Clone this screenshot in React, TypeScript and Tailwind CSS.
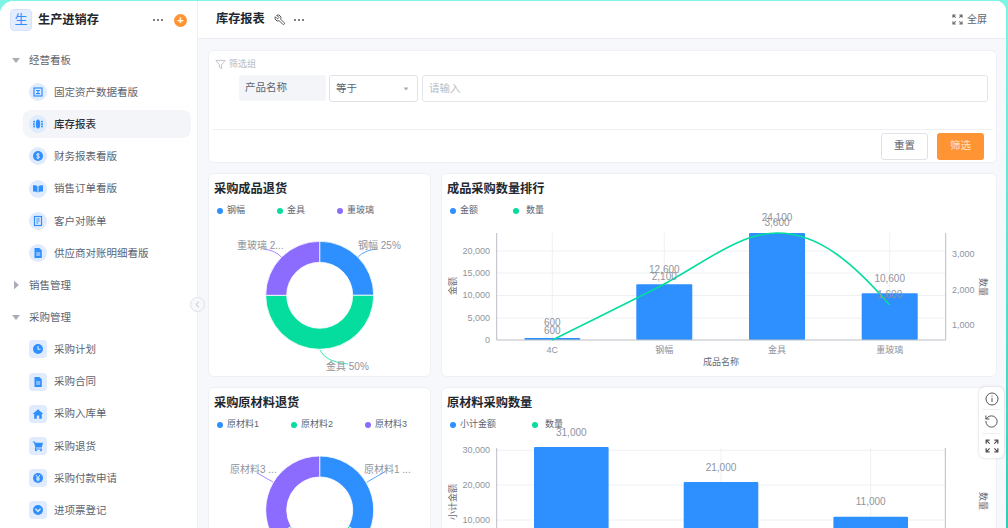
import React from "react";
import { RotateCcw } from "lucide-react";

const BLUE = "#2e8fff";
const GREEN = "#05dd9e";
const PURPLE = "#8c6cff";
const C = { fill: "#2e8fff" };

const icons: Record<string, React.ReactNode> = {
  board: (
    <g fill="none" stroke={BLUE} strokeWidth="1.2">
      <rect x="2" y="2" width="8" height="8" />
      <path d="M4 4.5h4M6 4.5v3M4 7.7h4" />
    </g>
  ),
  globe: (
    <g {...C}>
      <ellipse cx="6" cy="6" rx="2.2" ry="4.6" />
      <rect x="1.2" y="2.8" width="1.8" height="1.8" rx=".6" />
      <rect x="1" y="5.2" width="1.8" height="1.8" rx=".6" />
      <rect x="1.2" y="7.6" width="1.8" height="1.8" rx=".6" />
      <rect x="9" y="2.8" width="1.8" height="1.8" rx=".6" />
      <rect x="9.2" y="5.2" width="1.8" height="1.8" rx=".6" />
      <rect x="9" y="7.6" width="1.8" height="1.8" rx=".6" />
    </g>
  ),
  dollar: (
    <g>
      <circle cx="6" cy="6" r="5" fill={BLUE} />
      <path d="M7.6 4.4C7.2 3.6 4.6 3.5 4.5 4.8c0 1.5 3.1.8 3.1 2.4 0 1.3-2.6 1.2-3.2.3M6 2.8v6.4" fill="none" stroke="#e0ebfd" strokeWidth="1" />
    </g>
  ),
  book: (
    <g {...C}>
      <path d="M1 2.5c1.8-.4 3.4-.1 4.5.8v6.2C4.4 8.7 2.8 8.4 1 8.8z" />
      <path d="M11 2.5c-1.8-.4-3.4-.1-4.5.8v6.2c1.1-.8 2.7-1.1 4.5-.7z" />
    </g>
  ),
  doc: (
    <g fill="none" stroke={BLUE} strokeWidth="1.2">
      <rect x="2.5" y="1.5" width="7" height="9" />
      <path d="M4.3 4h3.4M4.3 6h3.4M4.3 8h2" />
    </g>
  ),
  file: (
    <g>
      <path d="M2.5 1h4.8L9.8 3.5V11H2.5z" fill={BLUE} />
      <path d="M4.2 6h4M4.2 8h4" stroke="#e0ebfd" strokeWidth="1" />
    </g>
  ),
  clock: (
    <g>
      <circle cx="6" cy="6" r="5" fill={BLUE} />
      <path d="M6 3v3.3h2.6" fill="none" stroke="#e0ebfd" strokeWidth="1.1" />
    </g>
  ),
  home: <path d="M6 1.2L11.3 6H9.8v4.8H7.2V7.6H4.8v3.2H2.2V6H.7z" {...C} />,
  cart: (
    <g {...C}>
      <path d="M.8 1.5h2l.5 1.3H11L9.8 7.5H4.2l-.2 1h6v1H2.7l.6-2.3L2 2.5H.8z" />
      <circle cx="4" cy="10.3" r="1" />
      <circle cx="9" cy="10.3" r="1" />
    </g>
  ),
  yen: (
    <g>
      <circle cx="6" cy="6" r="5" fill={BLUE} />
      <path d="M4 3l2 2.8L8 3M6 5.8V9.5M4.2 6.2h3.6M4.2 7.8h3.6" fill="none" stroke="#e0ebfd" strokeWidth="1" />
    </g>
  ),
  chev: (
    <g>
      <circle cx="6" cy="6" r="5" fill={BLUE} />
      <path d="M3.5 4.8L6 7.4l2.5-2.6" fill="none" stroke="#e0ebfd" strokeWidth="1.4" />
    </g>
  ),
};

function MenuItem({ icon, label, active, square }: { icon: string; label: string; active?: boolean; square?: boolean }) {
  return (
    <div className={`flex h-7 items-center rounded-lg pl-[6px] ${active ? "bg-[#f3f5f9] text-[#2c3038]" : "text-[#5c6470]"}`}>
      <span className={`flex h-[18px] w-[18px] shrink-0 items-center justify-center bg-[#e0ebfd] ${square ? "rounded-[4px]" : "rounded-full"}`}>
        <svg width="12" height="12" viewBox="0 0 12 12">{icons[icon]}</svg>
      </span>
      <span className={`ml-[7px] text-[10.5px] leading-none ${active ? "font-medium" : ""}`}>{label}</span>
    </div>
  );
}

function Group({ label, open }: { label: string; open: boolean }) {
  return (
    <div className="flex h-7 items-center text-[#5c6470]">
      <svg width="10" height="10" viewBox="0 0 10 10" className="ml-[-18px] mr-2" fill="#a9adb5">
        {open ? <path d="M1 3h8L5 8z" /> : <path d="M3 .8v8.4L8 5z" />}
      </svg>
      <span className="text-[10.5px] leading-none">{label}</span>
    </div>
  );
}

function Dots() {
  return (
    <span className="flex gap-[2px]">
      <i className="h-[2px] w-[2px] rounded-full bg-[#555]" />
      <i className="h-[2px] w-[2px] rounded-full bg-[#555]" />
      <i className="h-[2px] w-[2px] rounded-full bg-[#555]" />
    </span>
  );
}

function Sidebar() {
  return (
    <aside className="flex h-full w-[197px] shrink-0 flex-col bg-white">
      <div className="flex h-[38px] shrink-0 items-center pl-[10px]">
        <span className="flex h-[22px] w-[22px] items-center justify-center rounded-[4px] border border-[#d6e3fa] bg-[#e4edfd] text-[13px] text-[#2e8fff]">生</span>
        <span className="ml-[6px] w-[61px] text-[12.2px] font-semibold text-[#23272e]">生产进销存</span>
        <span className="ml-[54px]"><Dots /></span>
        <span className="ml-[11px] flex h-[13px] w-[13px] items-center justify-center rounded-full bg-[#ff9434] text-[11px] font-bold leading-none text-white">+</span>
      </div>
      <div className="flex flex-col gap-[4.17px] pl-[29px] pr-[6px] pt-[7px]">
        <Group label="经营看板" open />
        <div className="ml-[-6px] flex flex-col gap-[4.17px]">
          <MenuItem icon="board" label="固定资产数据看版" />
          <MenuItem icon="globe" label="库存报表" active />
          <MenuItem icon="dollar" label="财务报表看版" />
          <MenuItem icon="book" label="销售订单看版" />
          <MenuItem icon="doc" label="客户对账单" />
          <MenuItem icon="file" label="供应商对账明细看版" />
        </div>
        <Group label="销售管理" open={false} />
        <Group label="采购管理" open />
        <div className="ml-[-6px] flex flex-col gap-[4.17px]">
          <MenuItem icon="clock" label="采购计划" square />
          <MenuItem icon="file" label="采购合同" square />
          <MenuItem icon="home" label="采购入库单" square />
          <MenuItem icon="cart" label="采购退货" square />
          <MenuItem icon="yen" label="采购付款申请" square />
          <MenuItem icon="chev" label="进项票登记" square />
        </div>
      </div>
    </aside>
  );
}

function Expand({ size, stroke }: { size: number; stroke: string }) {
  return (
    <svg width={size} height={size} viewBox="0 0 12 12" fill="none" stroke={stroke} strokeWidth="1.1">
      <path d="M1 4V1h3M1 1l3 3M8 1h3v3M11 1L8 4M1 8v3h3M1 11l3-3M8 11h3V8M11 11L8 8" />
    </svg>
  );
}

function Header() {
  return (
    <header className="flex h-[38px] shrink-0 items-center border-b border-[#e9ecf1] bg-white pl-[18px] pr-[19px]">
      <span className="text-[12.2px] font-semibold text-[#23272e]">库存报表</span>
      <svg width="12" height="12" viewBox="0 0 24 24" fill="none" stroke="#555" strokeWidth="2" className="ml-[9px]">
        <path d="M14.7 6.3a1 1 0 0 0 0 1.4l1.6 1.6a1 1 0 0 0 1.4 0l3.77-3.77a6 6 0 0 1-7.94 7.94l-6.91 6.91a2.12 2.12 0 0 1-3-3l6.91-6.91a6 6 0 0 1 7.94-7.94z" transform="matrix(-1 0 0 1 24 0)" />
      </svg>
      <span className="ml-[8px]"><Dots /></span>
      <span className="ml-auto flex items-center gap-[4px] text-[10px] text-[#5c6470]">
        <Expand size={11} stroke="#666" />
        全屏
      </span>
    </header>
  );
}

function FilterCard() {
  return (
    <section className="flex h-[113px] shrink-0 flex-col rounded-md border border-[#eef0f4] bg-white">
      <div className="flex h-[24px] items-center gap-[3px] pl-[6px] pt-[3px] text-[9px] text-[#b5b9c0]">
        <svg width="11" height="11" viewBox="0 0 12 12" fill="none" stroke="#b5b9c0" strokeWidth=".9">
          <path d="M1 1.5h10L7.2 6.2v4.3L4.8 9V6.2z" />
        </svg>
        筛选组
      </div>
      <div className="flex h-[54px] items-start gap-[3px] pl-[30px] pr-[8px]">
        <div className="flex h-[26px] w-[87px] items-center rounded-[3px] bg-[#f3f5f8] pl-[6px] text-[10.5px] text-[#5c6470]">产品名称</div>
        <div className="flex h-[27px] w-[89px] items-center justify-between rounded-[3px] border border-[#dfe2e7] pl-[6px] pr-[8px] text-[10.5px] text-[#5c6470]">
          等于
          <svg width="6" height="4" viewBox="0 0 6 4" fill="#a9adb5"><path d="M.5.5h5L3 3.5z" /></svg>
        </div>
        <div className="ml-px flex h-[27px] flex-1 items-center rounded-[3px] border border-[#e3e5ea] pl-[6px] text-[10.5px] text-[#b8bcc3]">请输入</div>
      </div>
      <div className="mx-[3px] flex flex-1 items-center justify-end gap-[9px] border-t border-[#eef0f4] pr-[9px]">
        <button className="flex h-[27px] w-[47px] items-center justify-center rounded-[3px] border border-[#dfe2e7] bg-white text-[10.5px] text-[#5c6470]">重置</button>
        <button className="flex h-[27px] w-[47px] items-center justify-center rounded-[3px] bg-[#ff9434] text-[10.5px] text-[#ffe3c9]">筛选</button>
      </div>
    </section>
  );
}

function Legend({ items, gaps, wide }: { items: { c: string; t: string }[]; gaps: string[]; wide?: boolean }) {
  return (
    <div className="-mb-px -mt-[12px] flex h-[12px] shrink-0 items-center pl-[8px] text-[9px] text-[#5c6470]">
      {items.map((it, i) => (
        <span key={it.t} className={`flex items-center ${wide && i === 1 ? "gap-[7px]" : "gap-[4px]"} ${gaps[i]}`}>
          <i className="h-[6px] w-[6px] rounded-full" style={{ background: it.c }} />
          {it.t}
        </span>
      ))}
    </div>
  );
}

function Card({ title, className, children }: { title: string; className: string; children: React.ReactNode }) {
  return (
    <section className={`flex flex-col rounded-md border border-[#eef0f4] bg-white ${className}`}>
      <div className="h-[43px] shrink-0 pl-[5px] pt-[7px]">
        <h3 className="text-[12.2px] font-semibold leading-[16px] text-[#23272e]">{title}</h3>
      </div>
      {children}
    </section>
  );
}

function polar(cx: number, cy: number, r: number, deg: number) {
  const a = ((deg - 90) * Math.PI) / 180;
  return [cx + r * Math.cos(a), cy + r * Math.sin(a)];
}
function Slice({ cx, cy, from, to, fill }: { cx: number; cy: number; from: number; to: number; fill: string }) {
  const R = 54, r = 33;
  const [a, b] = polar(cx, cy, R, from);
  const [c, d] = polar(cx, cy, R, to);
  const [e, f] = polar(cx, cy, r, to);
  const [g, h] = polar(cx, cy, r, from);
  const large = to - from > 180 ? 1 : 0;
  return <path d={`M${a} ${b}A${R} ${R} 0 ${large} 1 ${c} ${d}L${e} ${f}A${r} ${r} 0 ${large} 0 ${g} ${h}Z`} fill={fill} stroke="#fff" strokeWidth=".8" />;
}

const labelCls = "fill-[#8f949d] text-[10px]";
const axisCls = "fill-[#8f949d] text-[9px]";
const titleCls = "fill-[#666c76] text-[9px]";

function T({ x, y, children, a = "middle", c = labelCls, r }: { x: number; y: number; children: React.ReactNode; a?: "middle" | "start" | "end"; c?: string; r?: number }) {
  return (
    <text x={x} y={y} textAnchor={a} dominantBaseline="middle" className={c} transform={r ? `rotate(${r} ${x} ${y})` : undefined}>
      {children}
    </text>
  );
}

function Donut1() {
  return (
    <svg viewBox="209 216 222 160" className="h-[160px] w-[222px] overflow-visible">
      <Slice cx={319.7} cy={295.3} from={0} to={90} fill={BLUE} />
      <Slice cx={319.7} cy={295.3} from={90} to={270} fill={GREEN} />
      <Slice cx={319.7} cy={295.3} from={270} to={360} fill={PURPLE} />
      <path d="M358.3 256.7Q365 250 377 249" fill="none" stroke={BLUE} strokeWidth=".8" />
      <path d="M281.7 257.3Q275 250 263 249" fill="none" stroke={PURPLE} strokeWidth=".8" />
      <path d="M320 350Q325 362 348 364" fill="none" stroke={GREEN} strokeWidth=".8" />
      <T x={358} y={246.5} a="start">钢幅 25%</T>
      <T x={237} y={246.5} a="start">重玻璃 2...</T>
      <T x={326} y={367.5} a="start">金具 50%</T>
    </svg>
  );
}

function Bars1() {
  const grid = [251, 273, 295.5, 318];
  const xs = [552.3, 664.3, 777, 889.7];
  const tops = [338, 284.3, 233, 293.3];
  return (
    <svg viewBox="442 216 554 160" className="h-[160px] w-[554px] overflow-visible">
      {grid.map((y) => <path key={y} d={`M497 ${y}H946`} stroke="#eef0f3" strokeWidth="1" />)}
      {xs.map((x) => <path key={x} d={`M${x} 233V340`} stroke="#eef0f3" strokeWidth="1" />)}
      {xs.map((x, i) => <rect key={x} x={x - 28} y={tops[i]} width="56" height={340 - tops[i]} rx="1" fill={BLUE} />)}
      <path d="M496.7 233V340H945.7V233" fill="none" stroke="#b9bdc4" strokeWidth="1" />
      <path d="M552.3 340C590 321 628 303 664.3 284C705 262 740 233 777 233C820 233 855 265 889.7 305" fill="none" stroke={GREEN} strokeWidth="1.6" />
      {[["20,000", 251.5], ["15,000", 273.5], ["10,000", 296], ["5,000", 318.5], ["0", 340.5]].map(([t, y]) => (
        <T key={t} x={490} y={y as number} a="end" c={axisCls}>{t}</T>
      ))}
      {[["3,000", 254.5], ["2,000", 290.5], ["1,000", 326]].map(([t, y]) => (
        <T key={t} x={952} y={y as number} a="start" c={axisCls}>{t}</T>
      ))}
      {["4C", "钢幅", "金具", "重玻璃"].map((t, i) => <T key={t} x={xs[i]} y={351} c={axisCls}>{t}</T>)}
      <T x={721} y={363} c={titleCls}>成品名称</T>
      <T x={454} y={286} c={titleCls} r={-90}>金额</T>
      <T x={982} y={287} c={titleCls} r={90}>数量</T>
      <T x={552.3} y={323}>600</T>
      <T x={552.3} y={331}>600</T>
      <T x={664.3} y={270}>12,600</T>
      <T x={664.3} y={277.7}>2,100</T>
      <T x={777} y={218.5}>24,100</T>
      <T x={777} y={223.5}>3,600</T>
      <T x={889.7} y={279}>10,600</T>
      <T x={889.7} y={295.5}>1,600</T>
    </svg>
  );
}

function Donut2() {
  return (
    <svg viewBox="209 430 222 160" className="h-[160px] w-[222px] overflow-visible">
      <Slice cx={319.7} cy={510} from={0} to={120} fill={BLUE} />
      <Slice cx={319.7} cy={510} from={120} to={240} fill={GREEN} />
      <Slice cx={319.7} cy={510} from={240} to={360} fill={PURPLE} />
      <path d="M366.7 482.3L385 471.7" stroke={BLUE} strokeWidth=".8" />
      <path d="M273 482L256.7 472.7" stroke={PURPLE} strokeWidth=".8" />
      <T x={364} y={470.5} a="start">原材料1 ...</T>
      <T x={230} y={470.5} a="start">原材料3 ...</T>
    </svg>
  );
}

function Bars2() {
  const xs = [571.3, 721, 870.7];
  const tops = [447, 482, 516.7];
  return (
    <svg viewBox="442 430 554 160" className="h-[160px] w-[554px] overflow-visible">
      {[450.3, 485, 520].map((y) => <path key={y} d={`M497 ${y}H946`} stroke="#eef0f3" strokeWidth="1" />)}
      {xs.map((x) => <path key={x} d={`M${x} 448V600`} stroke="#eef0f3" strokeWidth="1" />)}
      {xs.map((x, i) => <rect key={x} x={x - 37.3} y={tops[i]} width="74.6" height="120" rx="1" fill={BLUE} />)}
      <path d="M496.7 448V600M945.3 448V600" fill="none" stroke="#b9bdc4" strokeWidth="1" />
      {[["30,000", 450.8], ["20,000", 485.5], ["10,000", 520.5]].map(([t, y]) => (
        <T key={t} x={490} y={y as number} a="end" c={axisCls}>{t}</T>
      ))}
      <T x={454} y={502} c={titleCls} r={-90}>小计金额</T>
      <T x={982} y={501} c={titleCls} r={90}>数量</T>
      <T x={571.3} y={433}>31,000</T>
      <T x={721} y={468}>21,000</T>
      <T x={870.7} y={502.5}>11,000</T>
    </svg>
  );
}

function Toolbar() {
  return (
    <div className="absolute right-[4px] top-[387px] flex h-[71px] w-[25px] flex-col items-center rounded-md bg-white pt-px shadow-[0_0_3px_rgba(0,0,0,0.18)]">
      <div className="flex h-[22px] w-[19px] items-center justify-center border-b border-[#eef0f4]">
        <svg width="14" height="14" viewBox="0 0 14 14" fill="none" stroke="#555" strokeWidth="1">
          <circle cx="7" cy="7" r="6" />
          <path d="M7 6v4M7 3.6v1.1" />
        </svg>
      </div>
      <div className="flex h-[24px] w-[19px] items-center justify-center border-b border-[#eef0f4]">
        <RotateCcw size={15} color="#555" strokeWidth={1.6} />
      </div>
      <div className="flex h-[24px] items-center justify-center">
        <Expand size={14} stroke="#555" />
      </div>
    </div>
  );
}

export default function App() {
  return (
    <div className="relative h-[528px] w-[1008px] overflow-hidden bg-gradient-to-b from-[#7ff5e6] to-[#2fcdb8] pr-[2px] pt-px font-['Liberation_Sans','Noto_Sans_CJK_SC',sans-serif]">
      <div className="flex h-full overflow-hidden rounded-tl-[14px] rounded-tr-[10px] bg-white">
        <Sidebar />
        <main className="flex h-full min-w-0 flex-1 flex-col overflow-hidden border-l border-[#eef0f4] bg-[#f6f8fb]">
          <Header />
          <div className="flex flex-col gap-[10px] pl-[10px] pr-[9px] pt-[11px]">
            <FilterCard />
            <div className="flex h-[204px] shrink-0 gap-[10px]">
              <Card title="采购成品退货" className="w-[223px]">
                <Legend items={[{ c: BLUE, t: "钢幅" }, { c: GREEN, t: "金具" }, { c: PURPLE, t: "重玻璃" }]} gaps={["w-[60px]", "w-[60px]", ""]} />
                <Donut1 />
              </Card>
              <Card title="成品采购数量排行" className="flex-1">
                <Legend wide items={[{ c: BLUE, t: "金额" }, { c: GREEN, t: "数量" }]} gaps={["w-[63px]", ""]} />
                <Bars1 />
              </Card>
            </div>
            <div className="flex h-[204px] shrink-0 gap-[10px]">
              <Card title="采购原材料退货" className="w-[223px]">
                <Legend items={[{ c: BLUE, t: "原材料1" }, { c: GREEN, t: "原材料2" }, { c: PURPLE, t: "原材料3" }]} gaps={["w-[74px]", "w-[74px]", ""]} />
                <Donut2 />
              </Card>
              <Card title="原材料采购数量" className="flex-1">
                <Legend wide items={[{ c: BLUE, t: "小计金额" }, { c: GREEN, t: "数量" }]} gaps={["w-[82px]", ""]} />
                <Bars2 />
              </Card>
            </div>
          </div>
        </main>
      </div>
      <div className="absolute left-[190px] top-[297px] flex h-[15px] w-[15px] items-center justify-center rounded-full border border-[#dfe2e7] bg-[#f6f8fb]">
        <svg width="7" height="7" viewBox="0 0 7 7" fill="none" stroke="#a9adb5" strokeWidth=".8"><path d="M4.8.8L2 3.5l2.8 2.7" /></svg>
      </div>
      <Toolbar />
    </div>
  );
}
